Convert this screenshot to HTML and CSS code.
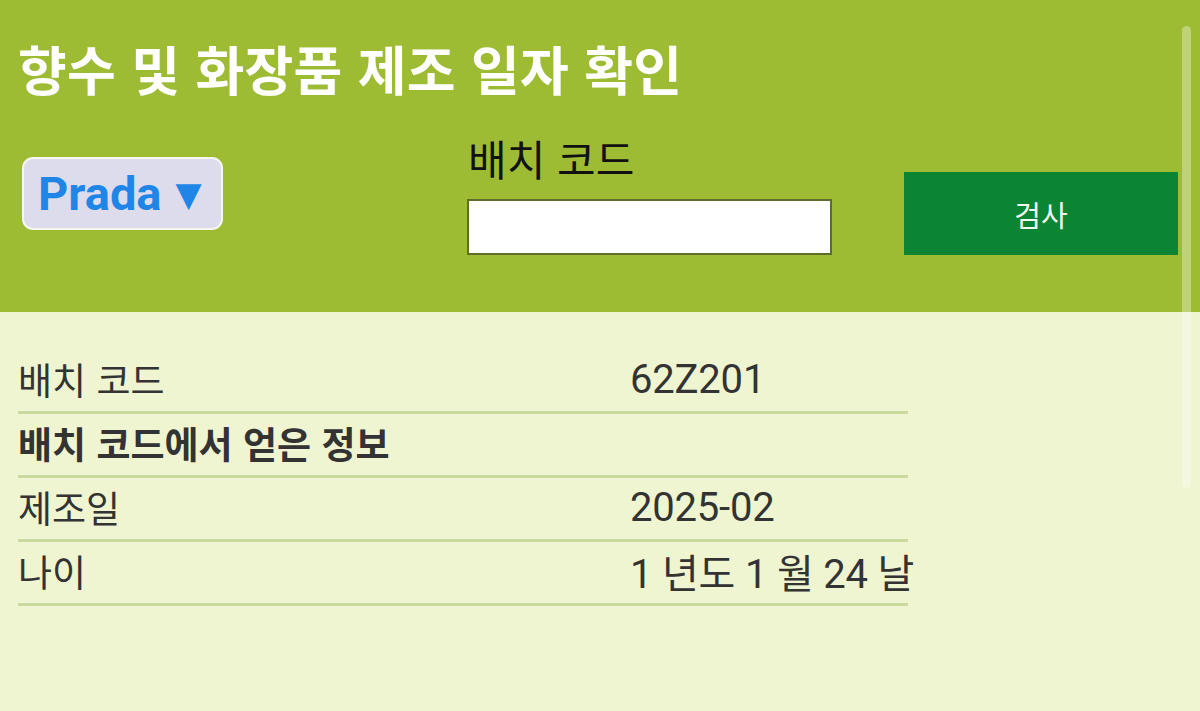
FILE: index.html
```html
<!DOCTYPE html>
<html lang="ko">
<head>
<meta charset="utf-8">
<title>향수 및 화장품 제조 일자 확인</title>
<link rel="stylesheet" href="styles.css">
</head>
<body>
<div class="page">
  <header class="header">
    <h1 class="title">향수 및 화장품 제조 일자 확인</h1>
    <div class="controls">
      <div class="brand-select">Prada<span class="arrow">▼</span></div>
      <div class="field">
        <label class="field-label">배치 코드</label>
        <div class="field-input"></div>
      </div>
      <button class="check-btn">검사</button>
    </div>
  </header>
  <main class="content">
    <div class="result">
      <div class="row"><div class="cell label">배치 코드</div><div class="cell value">62Z201</div></div>
      <div class="row"><div class="cell label strong">배치 코드에서 얻은 정보</div><div class="cell value"></div></div>
      <div class="row"><div class="cell label">제조일</div><div class="cell value">2025-02</div></div>
      <div class="row"><div class="cell label">나이</div><div class="cell value">1 년도 1 월 24 날</div></div>
    </div>
  </main>
  <div class="scroll-thumb"></div>
</div>
</body>
</html>
```

FILE: styles.css
```css
html, body {
  margin: 0;
  padding: 0;
  height: 100%;
  overflow: hidden;
}
body {
  font-family: Roboto, "Noto Sans CJK KR", sans-serif;
  background: #eef5d0;
}
.page {
  position: relative;
  height: 711px;
}
.header {
  background: #9dbb33;
  height: 312px;
  box-sizing: border-box;
  padding: 35px 22px 0 22px;
}
.title {
  margin: 0 0 0 -4px;
  font-family: "Noto Sans CJK KR", sans-serif;
  font-weight: 700;
  font-size: 53px;
  line-height: 66px;
  color: #ffffff;
  letter-spacing: 0.3px;
}
.controls {
  display: grid;
  grid-template-columns: 445px 437px 274px;
  align-items: end;
  margin-top: 32px;
}
.brand-select {
  width: 201px;
  height: 73px;
  margin-bottom: 25px;
  box-sizing: border-box;
  border: 2px solid #f6f7f0;
  border-radius: 11px;
  background: #dcdcec;
  color: #1f86e8;
  font-family: Roboto, sans-serif;
  font-weight: 700;
  font-size: 47px;
  line-height: 69px;
  padding-left: 14px;
  white-space: nowrap;
}
.brand-select .arrow {
  font-size: 34px;
  display: inline-block;
  vertical-align: 4px;
  margin-left: 14px;
  font-family: "DejaVu Sans", sans-serif;
}
.field {
  display: flex;
  flex-direction: column;
}
.field-label {
  font-family: "Noto Sans CJK KR", sans-serif;
  font-size: 42px;
  line-height: 50px;
  color: #111;
  margin-left: 1px;
}
.field-input {
  width: 365px;
  height: 56px;
  box-sizing: border-box;
  border: 2px solid #5d6d2b;
  background: #ffffff;
  margin-top: 16px;
}
.check-btn {
  width: 274px;
  height: 83px;
  border: 0;
  background: #0b8534;
  color: #f4f8ee;
  font-family: "Noto Sans CJK KR", sans-serif;
  font-size: 29px;
  padding: 0;
  cursor: pointer;
}
.content {
  padding: 38px 18px 0 18px;
}
.result {
  width: 890px;
}
.row {
  display: grid;
  grid-template-columns: 612px 278px;
  height: 64px;
  box-sizing: border-box;
  border-bottom: 3px solid #cbd99e;
  align-items: center;
}
.cell {
  font-size: 37px;
  color: #333;
  white-space: nowrap;
  padding-bottom: 3px;
}
.label {
  font-family: "Noto Sans CJK KR", sans-serif;
}
.strong {
  font-weight: 700;
}
.value {
  font-family: Roboto, "Noto Sans CJK KR", sans-serif;
  font-size: 40px;
  letter-spacing: -0.2px;
}
.scroll-thumb {
  position: absolute;
  left: 1182px;
  top: 26px;
  width: 9px;
  height: 462px;
  border-radius: 5px;
  background: rgba(255, 255, 255, 0.35);
}
```
